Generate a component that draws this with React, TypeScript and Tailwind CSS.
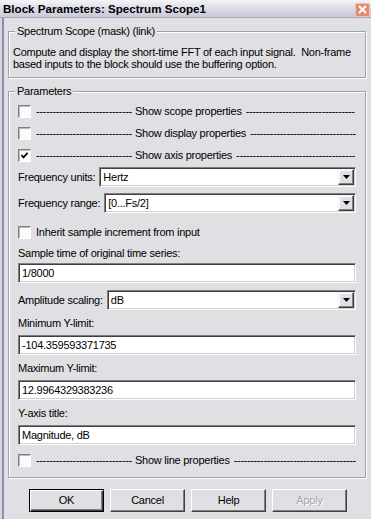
function Check({ checked }: { checked?: boolean }) {
  return (
    <span className="flex h-[13px] w-[13px] shrink-0 items-center justify-center border border-t-[#808080] border-l-[#808080] border-b-white border-r-white bg-[#fbfbfb] shadow-[inset_1px_1px_0_#b9b9bf]">
      {checked && (
        <svg width="9" height="9" viewBox="0 0 9 9">
          <path d="M1.5 4.2 L3.6 6.4 L7.6 1.8" fill="none" stroke="#000" strokeWidth="1.7" />
        </svg>
      )}
    </span>
  );
}

// "--------- Show xxx properties ---------" toggles
function Section({ label, checked, right }: { label: string; checked?: boolean; right: number }) {
  return (
    <div className="flex h-[22px] min-w-0 items-center">
      <Check checked={checked} />
      <span className="ml-[5px] w-[99px] shrink-0 overflow-hidden whitespace-nowrap tracking-[-0.36px]">
        {"-".repeat(29)}
      </span>
      <span className="whitespace-nowrap">{label}</span>
      <span className="ml-[4px] min-w-0 flex-1 overflow-hidden whitespace-nowrap tracking-[-0.36px]">
        {"-".repeat(right)}
      </span>
    </div>
  );
}

function Select({ value }: { value: string }) {
  return (
    <div className="flex h-[20px] min-w-0 flex-1 items-center border border-t-[#808080] border-l-[#808080] border-b-white border-r-white bg-white shadow-[inset_1px_1px_0_#404040,inset_-1px_-1px_0_#d4d0c8]">
      <span className="flex-1 pl-[3px]">{value}</span>
      <span className="mr-[1px] flex h-[16px] w-[16px] items-center justify-center border border-t-[#f4f4f6] border-l-[#f4f4f6] border-b-[#404040] border-r-[#404040] bg-[#e0dfe3] shadow-[inset_-1px_-1px_0_#808080,inset_1px_1px_0_#fff]">
        <svg width="7" height="4" viewBox="0 0 7 4">
          <path d="M0 0 H7 L3.5 4 Z" fill="#000" />
        </svg>
      </span>
    </div>
  );
}

function Field({ value }: { value: string }) {
  return (
    <div className="flex h-[20px] items-center border border-t-[#808080] border-l-[#808080] border-b-white border-r-white bg-white pl-[3px] shadow-[inset_1px_1px_0_#404040,inset_-1px_-1px_0_#d4d0c8]">
      {value}
    </div>
  );
}

function Label({ text }: { text: string }) {
  return <div className="flex h-[25px] items-center pt-[1px]">{text}</div>;
}

function Btn({ children, def, disabled }: { children: string; def?: boolean; disabled?: boolean }) {
  return (
    <button
      className={
        def
          ? "flex h-[23px] w-[75px] items-center justify-center border border-black bg-[#e0dfe3] shadow-[inset_1px_1px_0_#fff,inset_-1px_-1px_0_#404040,inset_-2px_-2px_0_#808080]"
          : "flex h-[23px] w-[75px] items-center justify-center border border-t-white border-l-white border-b-[#404040] border-r-[#404040] bg-[#e0dfe3] shadow-[inset_-1px_-1px_0_#808080]"
      }
    >
      <span className={disabled ? "text-[#a7a6aa] [text-shadow:1px_1px_0_#fff]" : ""}>{children}</span>
    </button>
  );
}

export default function App() {
  return (
    <div className="flex h-[519px] w-[371px] flex-col overflow-hidden bg-[#e0dfe3] font-['Liberation_Sans',Arial,sans-serif] text-[11px] leading-[13px] tracking-[-0.25px] text-black">
      {/* title bar */}
      <div className="flex h-[17px] shrink-0 items-center justify-between bg-gradient-to-b from-[#f4f4f8] via-[#dcdce6] to-[#c9c9d8] pl-[3px] pr-[1px]">
        <span className="text-[11.6px] font-bold tracking-normal">Block Parameters: Spectrum Scope1</span>
        <span className="mt-[2px] flex h-[14px] w-[15px] items-center justify-center rounded-[2px] border border-[#f3c2b4] bg-[#e48a74]">
          <svg width="9" height="9" viewBox="0 0 9 9">
            <path d="M1 1 L8 8 M8 1 L1 8" stroke="#fff" strokeWidth="2" />
          </svg>
        </span>
      </div>
      <div className="h-[1px] shrink-0 bg-[#a6a6bc]" />

      <div className="flex min-w-0 flex-1">
        <div className="w-[2px] bg-[#d4d4de]" />
        <div className="w-[2px] bg-[#8d8da8]" />

        <div className="flex min-w-0 flex-1 flex-col pl-[4px] pr-[5px]">
          <fieldset className="mt-[7px] min-w-0 border border-[#a0a0a8] px-[4px] pb-[7px] shadow-[1px_1px_0_#fff,inset_1px_1px_0_#fff]">
            <legend className="ml-[2px] bg-[#e0dfe3] px-[2px]">Spectrum Scope (mask) (link)</legend>
            <p className="pt-[8px] leading-[12px]">
              Compute and display the short-time FFT of each input signal.&nbsp; Non-frame based inputs to the block should use the buffering option.
            </p>
          </fieldset>

          <fieldset className="mt-[7px] min-w-0 border border-[#a0a0a8] px-[9px] pb-[6px] shadow-[1px_1px_0_#fff,inset_1px_1px_0_#fff]">
            <legend className="ml-[-3px] bg-[#e0dfe3] px-[2px]">Parameters</legend>
            <div className="mt-[2px] flex min-w-0 flex-col">
              <Section label="Show scope properties" right={33} />
              <Section label="Show display properties" right={32} />
              <Section label="Show axis properties" checked right={36} />

              <div className="mt-[1px] flex items-center gap-[4px]">
                <span className="whitespace-nowrap">Frequency units:</span>
                <Select value="Hertz" />
              </div>
              <div className="mt-[6px] flex items-center gap-[4px]">
                <span className="whitespace-nowrap">Frequency range:</span>
                <Select value="[0...Fs/2]" />
              </div>

              <div className="mt-[8px] flex h-[22px] items-center gap-[5px]">
                <Check />
                <span>Inherit sample increment from input</span>
              </div>
              <div className="flex h-[20px] items-center">Sample time of original time series:</div>
              <Field value="1/8000" />

              <div className="mt-[7px] flex items-center gap-[4px]">
                <span className="whitespace-nowrap">Amplitude scaling:</span>
                <Select value="dB" />
              </div>

              <Label text="Minimum Y-limit:" />
              <Field value="-104.359593371735" />
              <Label text="Maximum Y-limit:" />
              <Field value="12.9964329383236" />
              <Label text="Y-axis title:" />
              <Field value="Magnitude, dB" />

              <div className="mt-[4px]">
                <Section label="Show line properties" right={37} />
              </div>
            </div>
          </fieldset>

          <div className="mt-[11px] flex gap-[6px] pl-[21px]">
            <Btn def>OK</Btn>
            <Btn>Cancel</Btn>
            <Btn>Help</Btn>
            <Btn disabled>Apply</Btn>
          </div>
        </div>
      </div>
    </div>
  );
}
